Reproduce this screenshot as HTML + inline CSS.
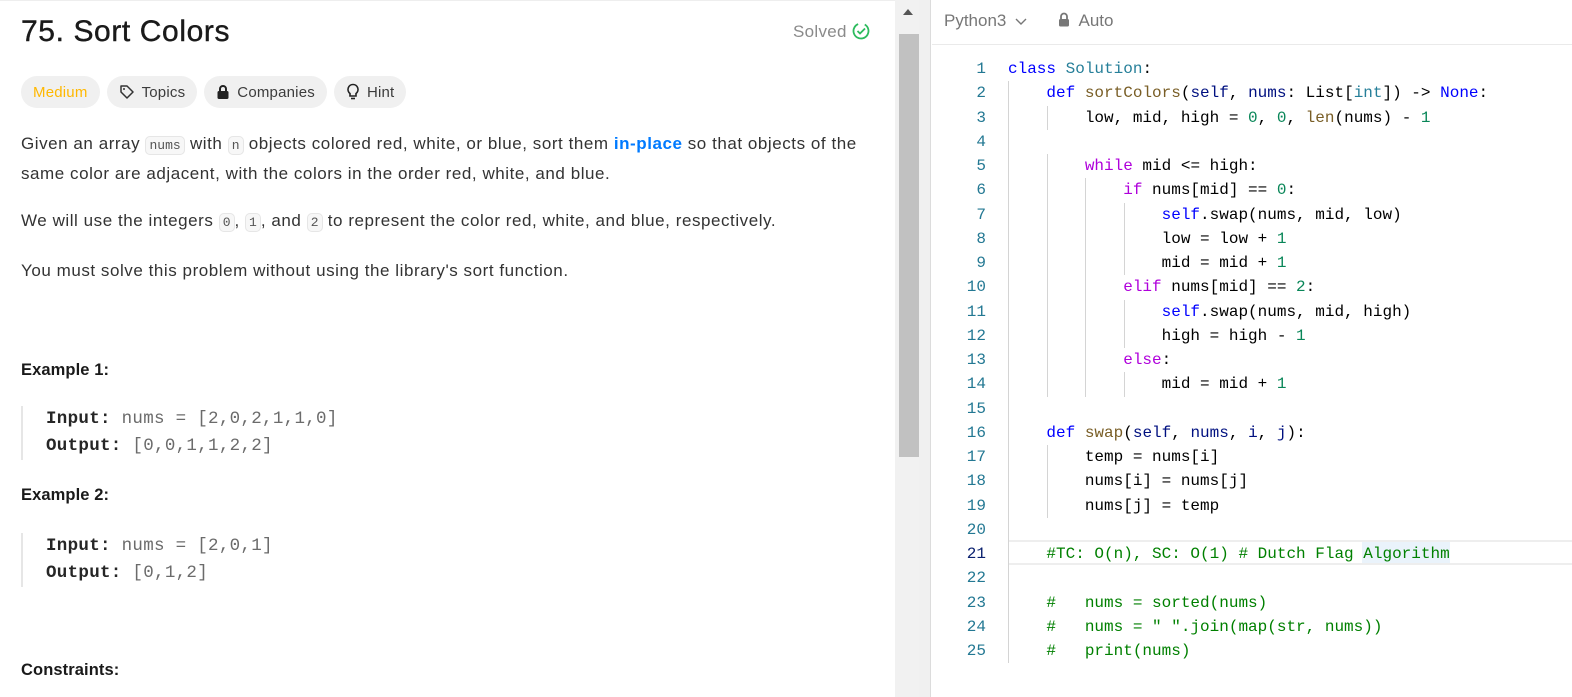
<!DOCTYPE html>
<html><head><meta charset="utf-8">
<style>
*{margin:0;padding:0;box-sizing:border-box}
body{width:1572px;height:697px;overflow:hidden;background:#fff;font-family:"Liberation Sans",sans-serif;color:#262626;position:relative}
.left{position:absolute;left:0;top:0;width:895px;height:697px;background:#fff;border-top:1px solid #eee}
h1{position:absolute;left:21px;top:14px;font-size:30px;font-weight:normal;color:#1a1a1a;letter-spacing:0.6px;-webkit-text-stroke:0.4px #1a1a1a}
.solved{position:absolute;left:793px;top:21px;font-size:17px;color:#8a8a8a;letter-spacing:0.3px}
.pills{position:absolute;left:21px;top:75px;display:flex;gap:7px}
.pill{height:32px;border-radius:16px;background:#f0f0f0;font-size:15px;color:#3c3c3c;display:flex;align-items:center;padding:0 12px;gap:7px;letter-spacing:0.2px}
.p{position:absolute;left:21px;font-size:17px;line-height:28px;color:#333;width:850px;letter-spacing:0.55px}
code{font-family:"Liberation Mono",monospace;font-size:13px;background:#f7f7f7;border:1px solid #e6e6e6;border-radius:5px;padding:1px 3px;color:#555;letter-spacing:0}
.b{font-weight:bold;font-size:16.5px;color:#1a1a1a;position:absolute;left:21px;letter-spacing:0.1px}
.pre{position:absolute;left:21px;border-left:2px solid #e6e6e6;padding-left:23px;font-family:"Liberation Mono",monospace;font-size:17.5px;line-height:27px;color:#6b6b6b;letter-spacing:0.3px}
.pre b{color:#262626}
.track{position:absolute;left:895px;top:0;width:24px;height:697px;background:#f1f1f1}
.thumb{position:absolute;left:899px;top:34px;width:21px;height:423px;background:#c1c1c1}
.gut{position:absolute;left:919px;top:0;width:12px;height:697px;background:#f0f0f0;border-right:1px solid #dcdcdc}
.hdr{position:absolute;left:932px;top:0;right:0;height:45px;border-bottom:1px solid #eaeaea;font-size:17px;color:#777}
.code{position:absolute;left:937px;top:57px;right:0;font-family:"Liberation Mono",monospace;font-size:16px;color:#000}
.ln{height:24.25px;line-height:24.25px;position:relative;white-space:pre}
.num{position:absolute;right:calc(100% - 49px);color:#237893;text-align:right;width:40px}
.t{position:absolute;left:71px}
.g{position:absolute;top:0;width:1px;height:24.25px;background:#d4d4d4}
.k{color:#0000ff}.c{color:#267f99}.f{color:#795e26}.v{color:#001080}.n{color:#098658}.pu{color:#af00db}.cm{color:#008000}
</style></head><body>
<div class="left">
<h1>75. Sort Colors</h1>
<div class="solved">Solved <svg width="18" height="18" viewBox="0 0 18 18" style="vertical-align:-3px"><circle cx="9" cy="9" r="7.5" fill="none" stroke="#2cbb5d" stroke-width="1.8" stroke-dasharray="40 8" transform="rotate(-60 9 9)"/><path d="M5.5 9l2.5 2.5 5-5" fill="none" stroke="#2cbb5d" stroke-width="1.8"/></svg></div>
<div class="pills">
<div class="pill" style="color:#ffb800">Medium</div>
<div class="pill"><svg width="16" height="16" viewBox="0 0 16 16"><path d="M2 2h6l6 6-6 6-6-6z" fill="none" stroke="#333" stroke-width="1.5" stroke-linejoin="round"/><circle cx="5" cy="5" r="1" fill="#333"/></svg>Topics</div>
<div class="pill"><svg width="14" height="16" viewBox="0 0 14 16"><path d="M4 7V5a3 3 0 0 1 6 0v2" fill="none" stroke="#222" stroke-width="2"/><rect x="1.5" y="7" width="11" height="8" rx="1.5" fill="#222"/></svg>Companies</div>
<div class="pill"><svg width="14" height="18" viewBox="0 0 14 18"><path d="M7 1.5a5 5 0 0 0-3 9v2.5h6v-2.5a5 5 0 0 0-3-9z" fill="none" stroke="#222" stroke-width="1.6"/><path d="M5 15.5h4" stroke="#222" stroke-width="1.6"/></svg>Hint</div>
</div>
<div class="p" style="top:129px">Given an array <code>nums</code> with <code>n</code> objects colored red, white, or blue, sort them <b style="color:#007aff">in-place</b> so that objects of the same color are adjacent, with the colors in the order red, white, and blue.</div>
<div class="p" style="top:206px">We will use the integers <code>0</code>, <code>1</code>, and <code>2</code> to represent the color red, white, and blue, respectively.</div>
<div class="p" style="top:256px">You must solve this problem without using the library's sort function.</div>
<div class="b" style="top:360px">Example 1:</div>
<div class="pre" style="top:405px"><b>Input:</b> nums = [2,0,2,1,1,0]<br><b>Output:</b> [0,0,1,1,2,2]</div>
<div class="b" style="top:485px">Example 2:</div>
<div class="pre" style="top:532px"><b>Input:</b> nums = [2,0,1]<br><b>Output:</b> [0,1,2]</div>
<div class="b" style="top:660px">Constraints:</div>
</div>
<div class="track"></div>
<svg style="position:absolute;left:903px;top:9px" width="10" height="6"><path d="M0 6L5 0 10 6z" fill="#555"/></svg>
<div class="thumb"></div>
<div class="gut"></div>
<div class="hdr"><span style="position:absolute;left:12px;top:11px">Python3 <svg width="12" height="8" viewBox="0 0 12 8" style="margin-left:4px"><path d="M1 1l5 5 5-5" fill="none" stroke="#777" stroke-width="1.4"/></svg></span><span style="position:absolute;left:126px;top:11px"><svg width="12" height="15" viewBox="0 0 12 15" style="vertical-align:-1px"><path d="M3 7V4.5a3 3 0 0 1 6 0V7" fill="none" stroke="#777" stroke-width="1.8"/><rect x="1" y="7" width="10" height="7.5" rx="1.5" fill="#777"/></svg>&nbsp; Auto</span></div>
<div style="position:absolute;left:1008px;top:540px;right:0;height:25px;border-top:2px solid #eee;border-bottom:2px solid #eee"></div>
<div style="position:absolute;left:1362px;top:542px;width:88px;height:21px;background:#eaf3fb"></div>
<div class="code" id="code"></div>
<script>
var L=[
[0,'<span class="k">class</span> <span class="c">Solution</span>:'],
[1,'    <span class="k">def</span> <span class="f">sortColors</span>(<span class="v">self</span>, <span class="v">nums</span>: List[<span class="c">int</span>]) -&gt; <span class="k">None</span>:'],
[2,'        low, mid, high = <span class="n">0</span>, <span class="n">0</span>, <span class="f">len</span>(nums) - <span class="n">1</span>'],
[1,''],
[2,'        <span class="pu">while</span> mid &lt;= high:'],
[3,'            <span class="pu">if</span> nums[mid] == <span class="n">0</span>:'],
[4,'                <span class="k">self</span>.swap(nums, mid, low)'],
[4,'                low = low + <span class="n">1</span>'],
[4,'                mid = mid + <span class="n">1</span>'],
[3,'            <span class="pu">elif</span> nums[mid] == <span class="n">2</span>:'],
[4,'                <span class="k">self</span>.swap(nums, mid, high)'],
[4,'                high = high - <span class="n">1</span>'],
[3,'            <span class="pu">else</span>:'],
[4,'                mid = mid + <span class="n">1</span>'],
[1,''],
[1,'    <span class="k">def</span> <span class="f">swap</span>(<span class="v">self</span>, <span class="v">nums</span>, <span class="v">i</span>, <span class="v">j</span>):'],
[2,'        temp = nums[i]'],
[2,'        nums[i] = nums[j]'],
[2,'        nums[j] = temp'],
[1,''],
[1,'    <span class="cm">#TC: O(n), SC: O(1) # Dutch Flag Algorithm</span>'],
[1,''],
[1,'    <span class="cm">#   nums = sorted(nums)</span>'],
[1,'    <span class="cm">#   nums = " ".join(map(str, nums))</span>'],
[1,'    <span class="cm">#   print(nums)</span>']];
var h='';
L.forEach(function(l,i){var g='';for(var d=0;d<l[0];d++)g+='<div class="g" style="left:'+(71+d*38.5)+'px"></div>';
h+='<div class="ln"><span class="num"'+(i==20?' style="color:#0b216f"':'')+'>'+(i+1)+'</span>'+g+'<span class="t">'+l[1]+'</span></div>';});
document.getElementById('code').innerHTML=h;
</script>
</body></html>
